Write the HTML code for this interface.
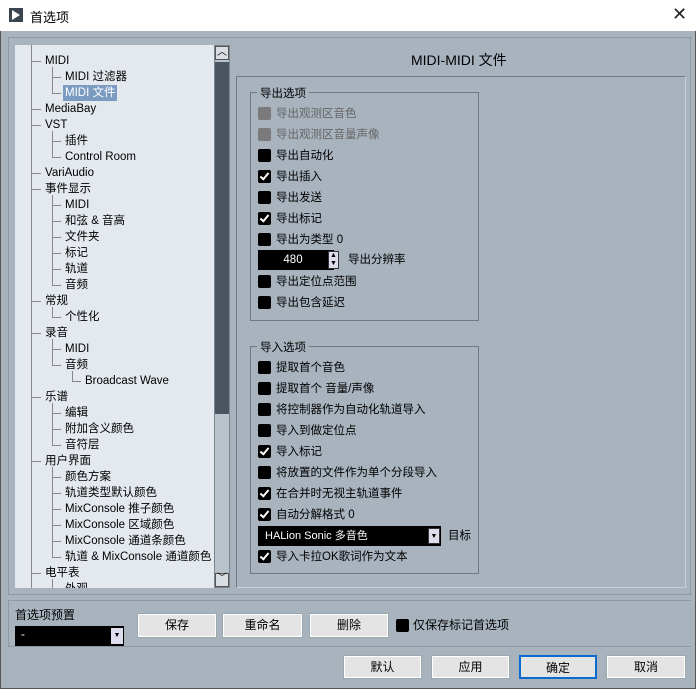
<!DOCTYPE html><html><head><meta charset="utf-8"><style>
*{margin:0;padding:0;box-sizing:border-box}
body{width:696px;height:689px;overflow:hidden;background:#a8b3be;font-family:"Liberation Sans","Noto Sans CJK SC",sans-serif;font-size:11.5px;color:#000;position:relative}
.a{position:absolute;white-space:nowrap}
.t{position:absolute;white-space:nowrap;line-height:16px}
.cb{position:absolute;width:13px;height:13px;background:#000;border-radius:2px}
.cb.g{background:#7b7b7b}
.cb.c::after{content:"";position:absolute;left:4px;top:1px;width:3px;height:7px;border:solid #fff;border-width:0 2px 2px 0;transform:rotate(40deg)}
.lbl{position:absolute;line-height:16px;white-space:nowrap}
.btn{position:absolute;background:#e4e4e4;border:1px solid #9aa;box-shadow:inset 0 0 0 1px #fff;text-align:center;line-height:23px;font-size:12px}
.hl{position:absolute;border-top:1px solid #7c8792}
.vl{position:absolute;border-left:1px solid #7c8792}
</style></head><body>
<div class="a" style="left:0;top:0;width:696px;height:31px;background:#fff"></div>
<div class="a" style="left:9px;top:8px;width:14px;height:14px;background:#3a4550"></div>
<div class="a" style="left:12px;top:10px;width:0;height:0;border-left:8px solid #fff;border-top:5px solid transparent;border-bottom:5px solid transparent"></div>
<div class="a" style="left:30px;top:7px;font-size:13px">首选项</div>
<div class="a" style="left:672px;top:4px;font-size:18px;color:#222">✕</div>
<div class="a" style="left:0;top:31px;width:696px;height:658px;border:1px solid #555;border-top:none"></div>
<div class="a" style="left:8px;top:37px;width:683px;height:558px;border:1px solid #8e99a4"></div>
<!-- tree -->
<div class="a" style="left:15px;top:45px;width:199px;height:543px;background:#e4e9ef;overflow:hidden">
<div class="vl" style="left:16px;top:0;height:543px;border-color:#888"></div>
<div id="tree"></div>
</div>
<div class="a" style="left:214px;top:45px;width:16px;height:543px;background:#b9c3cc;border:1px solid #7a8590"></div>
<div class="a" style="left:215px;top:46px;width:14px;height:14px;background:#d8dee4;border:1px solid #555;font-size:10px;text-align:center;line-height:12px">︿</div>
<div class="a" style="left:215px;top:62px;width:14px;height:352px;background:#4a5561"></div>
<div class="a" style="left:215px;top:573px;width:14px;height:14px;background:#d8dee4;border:1px solid #555;font-size:10px;text-align:center;line-height:10px">﹀</div>
<!-- right -->
<div class="a" style="left:411px;top:50px;font-size:14px">MIDI-MIDI 文件</div>
<div class="a" style="left:236px;top:76px;width:450px;height:512px;border:1px solid #6f7a85;border-right-color:#c8d0d8;border-bottom-color:#c8d0d8"></div>
<div class="a" style="left:250px;top:92px;width:229px;height:229px;border:1px solid #6f7a85"></div>
<div class="a" style="left:257px;top:85px;background:#a8b3be;padding:0 3px">导出选项</div>
<div class="a" style="left:250px;top:346px;width:229px;height:228px;border:1px solid #6f7a85"></div>
<div class="a" style="left:257px;top:339px;background:#a8b3be;padding:0 3px">导入选项</div>
<div id="opts"></div>
<div class="a" style="left:258px;top:250px;width:76px;height:20px;background:#000;color:#fff;text-align:center;line-height:20px;padding-right:6px">480</div>
<div class="a" style="left:328px;top:251px;width:11px;height:18px;background:#dde;border:1px solid #333;font-size:7px;line-height:8px;text-align:center">▲<br>▼</div>
<div class="lbl" style="left:348px;top:252px">导出分辨率</div>
<div class="a" style="left:258px;top:526px;width:183px;height:20px;background:#000;color:#fff;line-height:20px;padding-left:7px;font-size:11px">HALion Sonic 多音色</div>
<div class="a" style="left:428px;top:528px;width:12px;height:16px;background:#dde;border:1px solid #333;font-size:7px;line-height:16px;text-align:center">▼</div>
<div class="lbl" style="left:448px;top:528px">目标</div>
<!-- preset -->
<div class="a" style="left:8px;top:600px;width:683px;height:47px;border:1px solid #8e99a4;border-right:none"></div>
<div class="a" style="left:15px;top:606px;font-size:12px">首选项预置</div>
<div class="a" style="left:15px;top:626px;width:109px;height:20px;background:#000;color:#fff;padding-left:6px;line-height:18px">-</div>
<div class="a" style="left:111px;top:628px;width:12px;height:16px;background:#dde;font-size:7px;line-height:16px;text-align:center">▼</div>
<div class="btn" style="left:137px;top:613px;width:80px;height:25px">保存</div>
<div class="btn" style="left:222px;top:613px;width:81px;height:25px">重命名</div>
<div class="btn" style="left:309px;top:613px;width:80px;height:25px">删除</div>
<div class="cb" style="left:396px;top:619px"></div>
<div class="lbl" style="left:413px;top:617px;font-size:12px">仅保存标记首选项</div>
<div class="btn" style="left:343px;top:655px;width:79px;height:24px">默认</div>
<div class="btn" style="left:431px;top:655px;width:79px;height:24px">应用</div>
<div class="btn" style="left:519px;top:655px;width:78px;height:24px;border:2px solid #0a6ad0;box-shadow:none">确定</div>
<div class="btn" style="left:606px;top:655px;width:80px;height:24px">取消</div>
<script>
var T=[[1,"MIDI"],[2,"MIDI 过滤器"],[2,"MIDI 文件",1],[1,"MediaBay"],[1,"VST"],[2,"插件"],[2,"Control Room"],[1,"VariAudio"],[1,"事件显示"],[2,"MIDI"],[2,"和弦 & 音高"],[2,"文件夹"],[2,"标记"],[2,"轨道"],[2,"音频"],[1,"常规"],[2,"个性化"],[1,"录音"],[2,"MIDI"],[2,"音频"],[3,"Broadcast Wave"],[1,"乐谱"],[2,"编辑"],[2,"附加含义颜色"],[2,"音符层"],[1,"用户界面"],[2,"颜色方案"],[2,"轨道类型默认颜色"],[2,"MixConsole 推子颜色"],[2,"MixConsole 区域颜色"],[2,"MixConsole 通道条颜色"],[2,"轨道 & MixConsole 通道颜色"],[1,"电平表"],[2,"外观"]];
var h="";T.forEach(function(r,i){var y=8+i*16,x=10+r[0]*20;
h+='<div class="hl" style="left:'+(x-13)+'px;top:'+(y+8)+'px;width:9px;border-color:#888"></div>';
if(r[0]>1){var p=i-1;while(T[p][0]>=r[0])p--;h+='<div class="vl" style="left:'+(x-13)+'px;top:'+(8+p*16+14)+'px;height:'+((i-p)*16-6)+'px;border-color:#888"></div>';}
h+='<div class="t" style="left:'+(x-0)+'px;top:'+y+'px;'+(r[2]?'background:#7b9cc0;color:#fff;padding:0 2px;margin-left:-2px':'')+'">'+r[1]+'</div>';});
document.getElementById("tree").innerHTML=h;
var O=[[106,"导出观测区音色","g"],[127,"导出观测区音量声像","g"],[148,"导出自动化",""],[169,"导出插入","c"],[190,"导出发送",""],[211,"导出标记","c"],[232,"导出为类型 0",""],[274,"导出定位点范围",""],[295,"导出包含延迟",""],
[360,"提取首个音色",""],[381,"提取首个 音量/声像",""],[402,"将控制器作为自动化轨道导入",""],[423,"导入到做定位点",""],[444,"导入标记","c"],[465,"将放置的文件作为单个分段导入",""],[486,"在合并时无视主轨道事件","c"],[507,"自动分解格式 0","c"],[549,"导入卡拉OK歌词作为文本","c"]];
h="";O.forEach(function(o){h+='<div class="cb '+o[2]+'" style="left:258px;top:'+(o[0]+1)+'px"></div><div class="lbl" style="left:276px;top:'+o[0]+'px;'+(o[2]=="g"?'color:#666':'')+'">'+o[1]+'</div>';});
document.getElementById("opts").innerHTML=h;
</script>
</body></html>
